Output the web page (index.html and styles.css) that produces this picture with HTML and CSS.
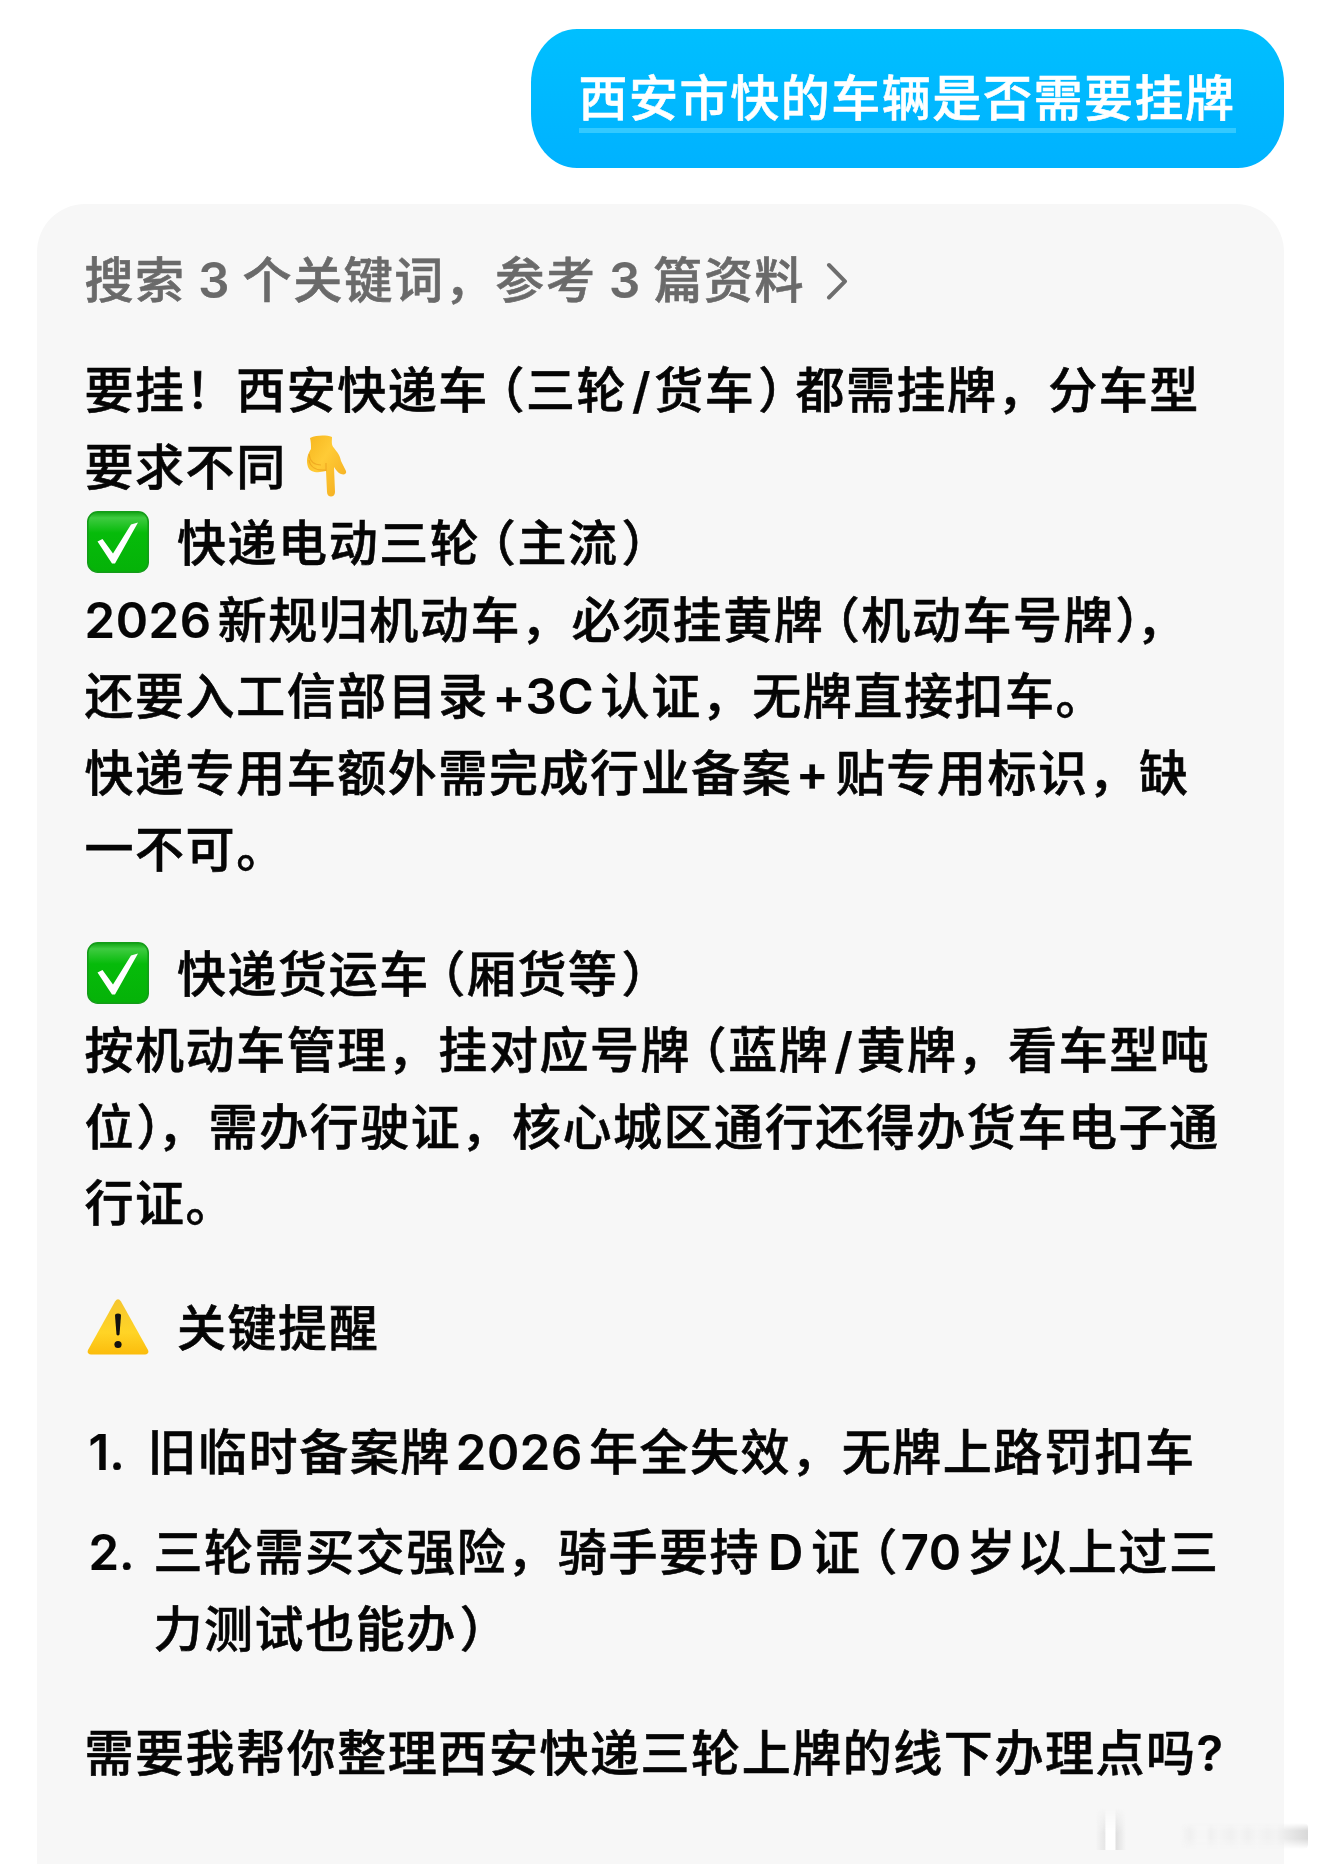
FILE: index.html
```html
<!DOCTYPE html>
<html lang="zh-CN">
<head>
<meta charset="utf-8">
<title>对话</title>
<link rel="stylesheet" href="styles.css">
</head>
<body>
<svg class="defs" width="0" height="0" aria-hidden="true">
  <defs>
    <linearGradient id="green" x1="0" y1="0" x2="0" y2="1"><stop offset="0" stop-color="#0fa312"/><stop offset=".1" stop-color="#3ecb40"/><stop offset=".35" stop-color="#06bb0a"/><stop offset="1" stop-color="#05b208"/></linearGradient>
    <linearGradient id="yellow" x1="0" y1="0" x2="0" y2="1"><stop offset="0" stop-color="#f5c62f"/><stop offset=".6" stop-color="#ffd426"/><stop offset="1" stop-color="#fbbc0c"/></linearGradient>
    <linearGradient id="skin" x1="0" y1="0" x2="1" y2="1"><stop offset="0" stop-color="#f6b51d"/><stop offset=".4" stop-color="#ffcb36"/><stop offset="1" stop-color="#f3aa1e"/></linearGradient>
    <symbol id="check" viewBox="0 0 62 62">
      <rect x=".8" y=".8" width="60.4" height="60.4" rx="10" fill="url(#green)" stroke="#149c19" stroke-width="1.6"/>
      <path d="M10.5 30.5l5-2.5 10.500 14.500L44 13.500l7-2L28 52.500h-3z" fill="#fff"/>
    </symbol>
  </defs>
</svg>
<main class="chat">
  <div class="question"><span class="question-text">西安市快的车辆是否需要挂牌</span></div>
  <article class="answer">
    <div class="sources"><span>搜索 <span class="num">3</span> 个关键词，参考 <span class="num">3</span> 篇资料</span><svg class="chevron" width="22" height="38" viewBox="0 0 22 38"><path d="M3 3l16 16.300L3 35.500" fill="none" stroke="#6d6d6d" stroke-width="4" stroke-linecap="round" stroke-linejoin="round"/></svg></div>
    <section class="block">
      <p>要挂！西安快递车<span class="open">（</span>三轮<span class="num slash">/</span>货车<span class="close">）</span>都需挂牌，分车型</p>
      <p>要求不同<svg class="hand" width="42" height="64" viewBox="0 0 42 64"><path d="M4 3C11 0 20 0 26 2c0 4-1 8 2 11 3 4 6 7 7 13l5 10c1 3-2 4-5 3-3-1-5-4-7-7l1 25c0 6-8 6-8 0l-1-21c-7 2-16 2-18-4C0 26 1 20 5 14c0-4 0-7-1-11z" fill="url(#skin)"/><path d="M3 25c1 7 7 11 17 10M3 19c1 8 5 11 12 11M20 36v-8" fill="none" stroke="#e79a19" stroke-width="1.200" stroke-opacity=".6"/></svg></p>
      <p><svg class="mark" width="62" height="62"><use href="#check"/></svg>快递电动三轮<span class="open">（</span>主流<span class="close">）</span></p>
      <p><span class="num lead">2026</span>新规归机动车，必须挂黄牌<span class="open">（</span>机动车号牌<span class="close pair">），</span></p>
      <p>还要入工信部目录<span class="num plus">+3C</span>认证，无牌直接扣车。</p>
      <p>快递专用车额外需完成行业备案<span class="num plus">+</span>贴专用标识，缺</p>
      <p>一不可。</p>
    </section>
    <section class="block">
      <p><svg class="mark" width="62" height="62"><use href="#check"/></svg>快递货运车<span class="open">（</span>厢货等<span class="close">）</span></p>
      <p>按机动车管理，挂对应号牌<span class="open">（</span>蓝牌<span class="num slash">/</span>黄牌，看车型吨</p>
      <p>位<span class="close pair">），</span>需办行驶证，核心城区通行还得办货车电子通</p>
      <p>行证。</p>
    </section>
    <section class="block">
      <p><svg class="mark" width="62" height="62" viewBox="0 0 62 62"><path d="M28 5.500q3-4.500 6 0L61 54q1.500 4-3 4.500H4q-4.500-.500-3-4.500z" fill="url(#yellow)"/><path d="M28 19.500q0-2 3-2t3 2l-1.500 19q-1.500 2-3 0z" fill="#111"/><circle cx="31" cy="48.500" r="3.600" fill="#111"/></svg>关键提醒</p>
    </section>
    <ol class="tips">
      <li class="tip"><span class="num index one">1.</span><div><p>旧临时备案牌<span class="num year">2026</span>年全失效，无牌上路罚扣车</p></div></li>
      <li class="tip"><span class="num index">2.</span><div><p>三轮需买交强险，骑手要持<span class="num letter">D</span>证<span class="open">（</span><span class="num age">70</span>岁以上过三</p><p>力测试也能办<span class="close">）</span></p></div></li>
    </ol>
    <section class="block">
      <p>需要我帮你整理西安快递三轮上牌的线下办理点吗<span class="num">?</span></p>
    </section>
  </article>
  <div class="smudge" aria-hidden="true"><i class="bar"></i><i class="streaks"></i></div>
</main>
</body>
</html>
```
FILE: styles.css
```css
* { box-sizing: border-box; }
body {
  margin: 0;
  background: #fff;
  color: #050505;
  font: 500 49px/76.5px Inter, "Noto Sans CJK SC", sans-serif;
  letter-spacing: 1.55px;
  -webkit-text-stroke: .6px;
}
p, ol { margin: 0; padding: 0; }
.defs { position: absolute; }
.chat {
  position: relative;
  height: 1864px;
  overflow: hidden;
  padding: 29px 36.5px 0 36.5px;
  display: flex;
  flex-direction: column;
  gap: 36px;
}
.question {
  align-self: flex-end;
  width: 753px;
  height: 139px;
  flex: none;
  border-radius: 46px / 54px;
  background: linear-gradient(#00bfff, #00b2ff);
  display: flex;
  justify-content: center;
  padding-top: 33px;
}
.question-text {
  height: 71px;
  line-height: 74px;
  width: 657px;
  white-space: nowrap;
  color: #fff;
  border-bottom: 5px solid #33c9ff;
}
.answer {
  flex: 1 0 auto;
  border-radius: 48px 48px 0 0;
  background: #f7f7f7;
  padding: 38.5px 47px 0 48px;
}
.answer p, .sources { white-space: nowrap; height: 76.5px; }
.sources {
  color: #6a6a6a;
  display: flex;
  align-items: center;
  gap: 21px;
  margin-bottom: 34px;
  word-spacing: -2px;
}
.block { margin-bottom: 48px; }
.num { letter-spacing: .6px; font-weight: 600; -webkit-text-stroke: .2px; }
.open, .close { font-feature-settings: "halt"; }
.open { margin-left: 11px; }
.close { margin-left: 3px; margin-right: 11px; }
.close.pair { letter-spacing: -3.5px; margin-left: 1.5px; margin-right: 30px; }
.slash { margin: 0 3px 0 5px; }
.lead { margin-right: 6px; }
.plus { margin: 0 6.5px 0 3.5px; }
.year { margin: 0 6px 0 5px; }
.letter { margin: 0 7px 0 8px; }
.age { margin: 0 5px 0 2px; }
.mark { vertical-align: -12px; margin: 0 28px 0 2.5px; }
.hand { vertical-align: -14px; margin-left: 19px; }
.tips { list-style: none; margin-bottom: 48px; }
.tip { display: flex; }
.tip + .tip { margin-top: 23.5px; }
.index { width: 69px; padding-left: 4px; letter-spacing: 0; }
.index.one { width: 63px; }
.smudge {
  position: absolute;
  left: 1096px;
  top: 1808px;
  width: 214px;
  height: 44px;
}
.bar {
  position: absolute;
  left: 0;
  top: 0;
  width: 30px;
  height: 42px;
  background: linear-gradient(90deg, transparent, #e6e6e6 28%, #fff 34%, #fff 62%, #e0e0e0 68%, transparent);
  mask-image: linear-gradient(transparent, #000 60%);
}
.streaks {
  position: absolute;
  right: 2px;
  top: 15px;
  width: 128px;
  height: 26px;
  border-radius: 0 4px 4px 0;
  background: linear-gradient(90deg, transparent, #f0f0f0 8%, #f6f6f6 14%, #f6f6f6 20%, #f0f0f0 24%, #f5f5f5 30%, #f0f0f0 40%, #f5f5f5 46%, #f0f0f0 53%, #f5f5f5 60%, #f1f1f1 68%, #f3f3f3 75%, #d8d8d8 100%);
  mask-image: linear-gradient(transparent, #000 30%, #000 60%, transparent);
}
```
